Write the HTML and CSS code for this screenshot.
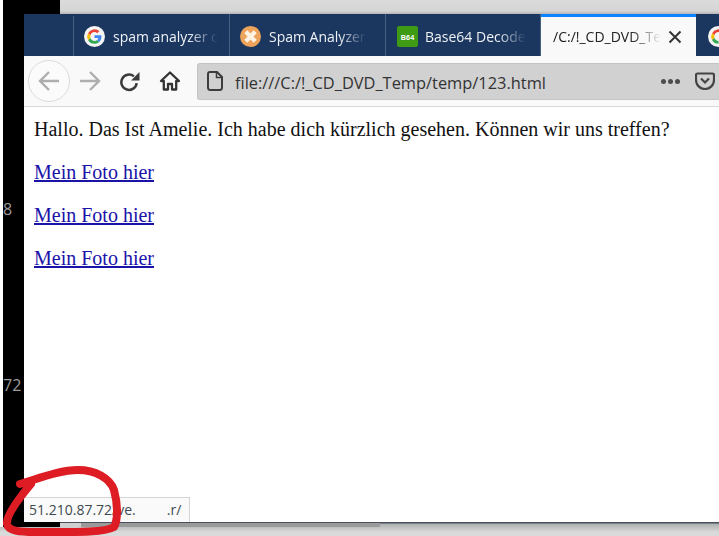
FILE: index.html
```html
<!DOCTYPE html>
<html lang="en">
<head>
<meta charset="utf-8">
<title>Spam mail link preview</title>
<link rel="stylesheet" href="styles.css">
</head>
<body>
<div class="shot">
  <div class="top-strip"><div class="top-black"></div><div class="top-grey"></div></div>
  <div class="middle">
    <div class="edge"></div>
    <div class="side">
      <span class="side-num side-8">8</span>
      <span class="side-num side-72">72</span>
    </div>
    <div class="browser">
      <div class="tabbar">
        <div class="tab-spacer"></div>
        <div class="tab tab-1">
          <svg class="fav" viewBox="0 0 20 20"><circle cx="10" cy="10" r="10" fill="#f4f4f4"/><path d="M16.600 10.200c0-.5 0-1-.1-1.400H10v2.700h3.700a3.200 3.200 0 0 1-1.400 2.100l2.200 1.700c1.300-1.200 2.100-3 2.100-5.100z" fill="#4285f4"/><path d="M10 17c1.900 0 3.400-.6 4.500-1.700l-2.200-1.700c-.6.4-1.400.7-2.300.7-1.800 0-3.300-1.200-3.800-2.800l-2.300 1.800A7 7 0 0 0 10 17z" fill="#34a853"/><path d="M6.200 11.500a4.200 4.200 0 0 1 0-2.900L3.900 6.800a7 7 0 0 0 0 6.500z" fill="#fbbc05"/><path d="M10 5.800c1 0 1.900.3 2.600 1l2-2A7 7 0 0 0 3.900 6.800l2.300 1.800C6.700 7 8.200 5.800 10 5.800z" fill="#ea4335"/></svg>
          <span class="tab-label">spam analyzer c</span>
        </div>
        <div class="tab tab-2">
          <svg class="fav" viewBox="0 0 20 20"><circle cx="10" cy="10" r="10" fill="#eea35a"/><path d="M5.500 5.500l9 9M14.500 5.500l-9 9" stroke="#fdf3e4" stroke-width="4"/></svg>
          <span class="tab-label">Spam Analyzer</span>
        </div>
        <div class="tab tab-3">
          <svg class="fav" viewBox="0 0 20 20"><rect width="20" height="20" rx="2" fill="#3f9a14"/><text x="10" y="13" class="b64">B64</text></svg>
          <span class="tab-label">Base64 Decode</span>
        </div>
        <div class="tab tab-active">
          <span class="tab-label active-label">/C:/!_CD_DVD_Te</span>
          <svg class="close" viewBox="0 0 14 14"><path d="M1.500 1.500l11 11M12.500 1.500l-11 11" stroke="#333" stroke-width="2" fill="none"/></svg>
        </div>
        <div class="tab tab-5">
          <svg class="fav" viewBox="0 0 20 20"><circle cx="10" cy="10" r="10" fill="#f4f4f4"/><path d="M10 5.800c1 0 1.900.3 2.600 1l2-2A7 7 0 0 0 3.900 6.800l2.300 1.800C6.700 7 8.200 5.800 10 5.800z" fill="#ea4335"/><path d="M6.200 11.500a4.200 4.200 0 0 1 0-2.900L3.900 6.800a7 7 0 0 0 0 6.500z" fill="#fbbc05"/><path d="M10 17a7 7 0 0 1-6.100-3.700l2.300-1.800c.5 1.600 2 2.800 3.800 2.800z" fill="#34a853"/></svg>
        </div>
      </div>
      <div class="toolbar">
        <div class="back">
          <svg class="nav-icon" viewBox="0 0 24 24"><path d="M22 12H3M12 3l-9 9 9 9" class="arrow"/></svg>
        </div>
        <svg class="nav-icon forward" viewBox="0 0 24 24"><path d="M2 12h19M12 3l9 9-9 9" class="arrow"/></svg>
        <svg class="reload" viewBox="0 0 20 20"><path d="M16.800 11.500a7.300 7.300 0 1 1-2.600-6.400" fill="none" stroke="#3c3c3c" stroke-width="2.400"/><path d="M11.500 9h8V1z" fill="#3c3c3c"/></svg>
        <svg class="home" viewBox="0 0 22 22"><path d="M11 2.500L2 11h2.800v8.500H9v-5.500h4v5.500h4.200V11H20z" fill="none" stroke="#333" stroke-width="2.300" stroke-linejoin="round"/></svg>
        <div class="urlbar">
          <svg class="page-icon" viewBox="0 0 16 20"><path d="M3 1h7l5 5v10.500a2.500 2.500 0 0 1-2.500 2.500h-9A2.500 2.500 0 0 1 1 16.500V3a2 2 0 0 1 2-2z" fill="none" stroke="#3c3c3c" stroke-width="2"/><path d="M9.500 1v5.500H15" fill="none" stroke="#3c3c3c" stroke-width="1.500"/></svg>
          <span class="url">file:///C:/!_CD_DVD_Temp/temp/123.html</span>
          <span class="dots"><i></i><i></i><i></i></span>
          <svg class="pocket" viewBox="0 0 20 18"><path d="M2.500 1.500h15a1.500 1.500 0 0 1 1.500 1.500v5a9 9 0 0 1-18 0V3a1.500 1.500 0 0 1 1.500-1.500z" fill="none" stroke="#444" stroke-width="2.200"/><path d="M6 6.500l4 4 4-4" fill="none" stroke="#444" stroke-width="2.200"/></svg>
        </div>
      </div>
      <div class="content">
        <p class="para">Hallo. Das Ist Amelie. Ich habe dich kürzlich gesehen. Können wir uns treffen?</p>
        <p class="para"><a class="link" href="#">Mein Foto hier</a></p>
        <p class="para"><a class="link" href="#">Mein Foto hier</a></p>
        <p class="para"><a class="link" href="#">Mein Foto hier</a></p>
      </div>
      <div class="status">51.210.87.72/ve.<span class="blur"></span>.r/</div>
    </div>
  </div>
  <div class="bottom-strip">
    <div class="bottom-black"></div>
    <div class="scroll-start"></div>
    <div class="scroll-thumb"></div>
    <div class="bottom-grey"></div>
  </div>
  <svg class="scribble" viewBox="0 0 719 536"><path d="M20 484C40 478 60 470 78 470C95 470 110 478 114 490C118 505 118 520 114 527C105 533 70 532 35 532C20 532 8 531 7 524C6 515 20 497 31 484" fill="none" stroke="#dd1c24" stroke-width="8" stroke-linecap="round" stroke-linejoin="round"/></svg>
</div>
</body>
</html>
```
FILE: styles.css
```css
* { box-sizing: border-box; }
html, body { margin: 0; padding: 0; background: #fff; }
.shot { position: relative; width: 719px; height: 536px; overflow: hidden; display: flex; flex-direction: column; font-family: "Open Sans", "Noto Sans", sans-serif; }
.top-strip { display: flex; height: 14px; flex: none; }
.top-black { width: 60px; background: linear-gradient(90deg, #fff 3px, #000 3px); }
.top-grey { flex: 1; background: linear-gradient(180deg, #dcdbdb 0, #d6d5d5 11px, #b5b5b7 14px); }
.middle { display: flex; height: 508px; flex: none; }
.edge { width: 3px; background: #fff; flex: none; }
.side { width: 21px; background: #000; flex: none; display: flex; flex-direction: column; align-items: flex-start; color: #9c9c9c; font-size: 16px; line-height: 18px; }
.side-8 { margin-top: 186px; }
.side-72 { margin-top: 158px; }
.browser { flex: 1; min-width: 0; display: flex; flex-direction: column; background: #fff; position: relative; }
.tabbar { display: flex; height: 42px; flex: none; background: #1c375f; align-items: stretch; }
.tab-spacer { width: 50px; flex: none; border-right: 1px solid #46607f; margin-top: 2px; }
.tab { flex: none; width: 156px; display: flex; align-items: center; padding: 2px 0 0 10px; gap: 8px; border-right: 1px solid #46607f; overflow: hidden; }
.tab-3 { width: 155px; padding-left: 11px; gap: 7px; }
.tab-5 { border-right: 0; width: 24px; padding-left: 12px; }
.fav { width: 21px; height: 21px; flex: none; }
.b64 { font: 700 7px "Liberation Sans", sans-serif; fill: #fff; text-anchor: middle; }
.tab-label { color: #eef1f5; font-size: 14px; white-space: nowrap; flex: none; -webkit-mask-image: linear-gradient(90deg, #000 72%, transparent 100%); mask-image: linear-gradient(90deg, #000 72%, transparent 100%); }
.tab-active { background: #f9f9fa; border-top: 3px solid #0a84ff; border-right: 0; width: 155px; padding: 0 14px 0 12px; justify-content: space-between; gap: 0; }
.active-label { color: #222; }
.close { width: 14px; height: 14px; flex: none; }
.toolbar { display: flex; height: 51px; flex: none; align-items: center; background: #f9f9fa; border-bottom: 1px solid #d8d8d8; padding-left: 4px; }
.back { width: 42px; height: 42px; border-radius: 50%; border: 1px solid #dcdcdc; background: #fbfbfb; display: flex; align-items: center; justify-content: center; flex: none; }
.nav-icon { width: 24px; height: 24px; flex: none; }
.arrow { fill: none; stroke: #aeaeae; stroke-width: 2.400; }
.forward { margin-left: 8px; }
.reload { width: 21px; height: 21px; flex: none; margin-left: 17px; }
.home { width: 22px; height: 22px; flex: none; margin-left: 19px; }
.urlbar { flex: 1; min-width: 0; height: 37px; margin-left: 16px; background: #d1d1d1; border: 1px solid #c4c4c4; border-right: 0; border-radius: 3px 0 0 3px; display: flex; align-items: center; padding: 3px 0 0 9px; }
.page-icon { width: 16px; height: 20px; flex: none; margin-top: -3px; }
.url { margin-left: 12px; font-size: 16.400px; color: #333; white-space: nowrap; flex: none; }
.dots { display: flex; gap: 2px; margin: -3px 0 0 115px; flex: none; }
.dots i { width: 5px; height: 5px; border-radius: 50%; background: #4d4d4d; }
.pocket { width: 20px; height: 18px; margin: -3px 0 0 15px; flex: none; }
.content { flex: 1; padding: 11px 0 0 10px; font-family: "Liberation Serif", serif; font-size: 20px; line-height: 22px; color: #111; overflow: hidden; }
.para { margin: 0 0 21px; white-space: nowrap; }
.link { color: #1a13a8; text-decoration: underline; }
.status { position: absolute; left: 0; bottom: 0; width: 166px; height: 25px; background: #fafafa; border: 1px solid #d4d4d4; border-left: 0; border-bottom: 0; padding-left: 5px; font-size: 14px; line-height: 24px; color: #3e4a4f; white-space: nowrap; overflow: hidden; }
.blur { display: inline-block; width: 31px; }
.bottom-strip { display: flex; height: 14px; flex: none; background: linear-gradient(180deg, #4a4f5c 0, #4a4f5c 1px, #adb0b3 2px, #c3c5c3 6px, #d9dad9 10px); }
.bottom-black { width: 60px; background: linear-gradient(90deg, #fff 3px, #000 3px); height: 5px; }
.scroll-start { width: 21px; height: 5px; margin-top: 1px; background: #cfcfcf; }
.scroll-thumb { width: 299px; height: 4px; margin-top: 1px; background: #9a9a9a; }
.bottom-grey { flex: 1; }
.scribble { position: absolute; inset: 0; width: 719px; height: 536px; pointer-events: none; }
```
